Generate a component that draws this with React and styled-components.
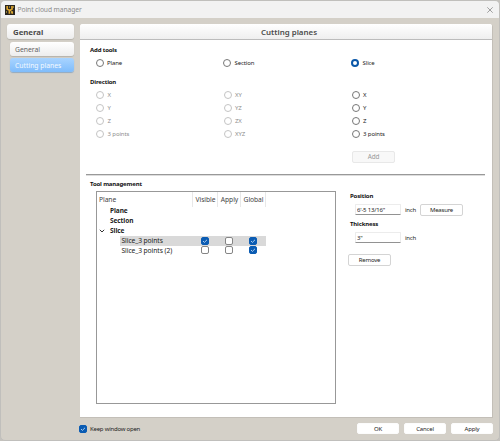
import styled, { createGlobalStyle } from "styled-components";

const GlobalStyle = createGlobalStyle`
    * {
        box-sizing: border-box;
    }

    body {
        margin: 0;
        background: #c4c2bd;
        font-family: 'Noto Sans', 'Open Sans', sans-serif;
        font-size: 6px;
        line-height: 10px;
        color: #222;
    }
`;

const Window = styled.div`
    display: flex;
    flex-direction: column;
    width: 500px;
    height: 441px;
    border: 1px solid #c0bfbc;
    border-radius: 5px;
    overflow: hidden;
    background: #d4d0c8;
    white-space: nowrap;
`;

const TitleBar = styled.header`
    display: flex;
    align-items: center;
    height: 17px;
    padding: 0 6px 0 4px;
    background: #f2f2f2;
    color: #8b8b8b;
    font-size: 6.7px;
    letter-spacing: -0.08px;
`;

const WindowTitle = styled.span`
    flex: 1;
    margin-left: 2.5px;
`;

const Body = styled.div`
    display: flex;
    padding: 6px 6px 0;
`;

const Sidebar = styled.nav`
    display: flex;
    flex-direction: column;
    align-items: flex-end;
    width: 67px;
    margin-right: 6px;
`;

const SideHeader = styled.div`
    width: 67px;
    height: 15px;
    padding-left: 6px;
    line-height: 17px;
    margin-bottom: 3px;
    border-radius: 3px;
    background: linear-gradient(#fff, #ededed);
    box-shadow: 0 1px 1px #b5b2ab;
    color: #4c4c4c;
    font-size: 7.8px;
    font-weight: 700;
`;

const SideItem = styled.div`
    width: 64px;
    height: 14px;
    padding-left: 5px;
    line-height: 15px;
    margin-bottom: 2px;
    border-radius: 3px;
    background: ${(p) => (p.$active ? "linear-gradient(#a9d4ff, #7fbcfb)" : "linear-gradient(#fff, #ededed)")};
    box-shadow: 0 1px 1px ${(p) => (p.$active ? "#92a9c0" : "#b5b2ab")};
    color: ${(p) => (p.$active ? "#f4faff" : "#606060")};
    font-size: 6.8px;
`;

const Panel = styled.main`
    width: 414px;
    height: 394px;
    border-radius: 3px 3px 0 0;
    background: #fff;
    border-right: 1px solid #c3bfb8;
    border-bottom: 1px solid #c3bfb8;
    overflow: hidden;
`;

const PanelTitle = styled.h1`
    height: 16px;
    margin: 0;
    padding-left: 6px;
    line-height: 17px;
    text-align: center;
    background: linear-gradient(#fff, #efefef);
    border-bottom: 1px solid #bcbcbc;
    color: #4c4c4c;
    font-size: 7.9px;
    font-weight: 600;
`;

const Heading = styled.h2`
    height: 10px;
    margin: 0;
    color: #111;
    font-size: 6px;
    font-weight: 700;
    letter-spacing: -0.15px;
`;

const Tools = styled.section`
    height: 134px;
    padding: 5px 0 0 10px;
`;

const RadioGrid = styled.div`
    display: grid;
    grid-template-columns: 127.5px 128px 1fr;
    grid-auto-rows: 12.8px;
    align-items: center;
    padding-left: ${(p) => p.$indent};
    margin: 2px 0 ${(p) => p.$gap || "0"};
`;

const RadioLabel = styled.label`
    display: flex;
    align-items: center;
    gap: 3.5px;
    color: ${(p) => (p.$disabled ? "#8e8e8e" : "#222")};
    font-size: 6px;
    letter-spacing: -0.1px;
`;

const Circle = styled.span`
    width: 8px;
    height: 8px;
    border-radius: 50%;
    border: ${(p) => (p.$checked ? "2.5px solid #0a57a8" : `1px solid ${p.$disabled ? "#c4c4c4" : "#777"}`)};
    background: #fff;
`;

const Button = styled.button`
    width: ${(p) => (p.$plain ? "42px" : "43px")};
    height: ${(p) => (p.$plain ? "11px" : "12px")};
    padding: 0;
    border: 1px solid ${(p) => (p.$plain ? "#fcfcfc" : "#d4d4d4")};
    border-radius: 2px;
    background: #fff;
    color: #222;
    font-family: inherit;
    font-size: 6px;
    line-height: 10px;
    letter-spacing: -0.2px;

    &:disabled {
        background: #f8f8f8;
        border-color: #e8e8e8;
        color: #999;
        font-size: 6.4px;
    }
`;

const AddRow = styled.div`
    padding: 11.5px 0 0 262px;
`;

const Divider = styled.hr`
    height: 2px;
    margin: 0 7px 0 6px;
    border: none;
    border-top: 1px solid #999;
    background: #ddd;
`;

const Management = styled.section`
    padding: 3px 0 0 10px;
`;

const Columns = styled.div`
    display: flex;
    padding: 2px 0 0 6px;
`;

const Tree = styled.div`
    width: 240px;
    height: 213px;
    border: 1px solid #989898;
    font-size: 6.7px;
`;

const TreeRow = styled.div`
    display: grid;
    grid-template-columns: ${(p) => (p.$head ? "96px" : "95px")} 25px 23px 25px;
    height: ${(p) => (p.$head ? "14.4px" : "9.8px")};
    line-height: ${(p) => (p.$head ? "15px" : "9.8px")};
    color: ${(p) => (p.$head ? "#444" : "#222")};
    letter-spacing: -0.07px;
    background: ${(p) => (p.$selected ? "linear-gradient(90deg, transparent 23px, #d9d9d9 23px, #d9d9d9 169px, transparent 169px)" : "none")};
`;

const HeadCell = styled.span`
    padding-left: ${(p) => (p.$first ? "2px" : "1px")};
    border-right: 1px solid #e8e8e8;
    text-align: ${(p) => (p.$first ? "left" : "center")};
`;

const Cell = styled.span`
    display: flex;
    align-items: center;
    justify-content: center;
`;

const NodeName = styled.span`
    display: flex;
    align-items: center;
    gap: 5px;
    padding-left: ${(p) => p.$indent}px;
    font-weight: ${(p) => (p.$bold ? 700 : 400)};
    font-size: ${(p) => (p.$bold ? "6.5px" : "6.7px")};
`;

const Box = styled.span`
    display: flex;
    flex: none;
    width: 8px;
    height: 8px;
    border: 1px solid ${(p) => (p.$checked ? "#0b5cb3" : "#858585")};
    border-radius: 2px;
    background: ${(p) => (p.$checked ? "#0b5cb3" : "#fff")};
`;

const Settings = styled.div`
    display: flex;
    flex-direction: column;
    align-items: flex-start;
    padding-left: 14px;
`;

const Field = styled.div`
    display: flex;
    align-items: center;
    height: 13px;
    margin: 2px 0 3px 5px;
`;

const RemoveRow = styled.div`
    margin: 7px 0 0 -2px;
`;

const Input = styled.input`
    width: 46px;
    height: 11px;
    padding: 0 1px;
    border: 1px solid #ececec;
    border-bottom-color: #929292;
    border-radius: 1px;
    outline: none;
    background: #fff;
    color: #222;
    font-family: inherit;
    font-size: 6px;
    letter-spacing: -0.2px;
`;

const Unit = styled.span`
    width: 15px;
    margin-left: 4px;
    letter-spacing: -0.2px;
`;

const Footer = styled.footer`
    display: flex;
    align-items: center;
    gap: 5px;
    height: 21px;
    padding: 0 6px 0 78px;
`;

const KeepOpen = styled.label`
    display: flex;
    align-items: center;
    gap: 3px;
    flex: 1;
    letter-spacing: -0.22px;
`;

const AppIcon = () => (
    <svg width="10" height="10" viewBox="0 0 10 10">
        <rect width="10" height="10" fill="#29251f" />
        <path d="M2.2 1v3l2.2 1.2v3.6M7 1v3L5 5.5M7.2 6.2v2.6" fill="none" stroke="#dda52d" strokeWidth="1.7" />
        <path d="M4 2h1M6 7h1M1 7h1M8 2h1" stroke="#f5d04e" strokeWidth="1" />
    </svg>
);

const CloseIcon = () => (
    <svg width="6" height="6" viewBox="0 0 6 6">
        <path d="M.3.3l5.4 5.4M5.7.3L.3 5.7" stroke="#8a8a8a" strokeWidth=".8" />
    </svg>
);

const Chevron = () => (
    <svg width="6" height="6" viewBox="0 0 6 6">
        <path d="M.8 1.8L3 4l2.2-2.2" fill="none" stroke="#333" strokeWidth="1" />
    </svg>
);

const Checkbox = ({ checked }) => (
    <Box $checked={checked}>
        {checked && (
            <svg width="6" height="6" viewBox="0 0 6 6">
                <path d="M1 3l1.4 1.4L5 1.8" fill="none" stroke="#d5e8fb" strokeWidth=".8" />
            </svg>
        )}
    </Box>
);

const Radio = ({ label, checked, disabled }) => (
    <RadioLabel $disabled={disabled}>
        <Circle $checked={checked} $disabled={disabled} />
        {label}
    </RadioLabel>
);

const directions = [
    ["X", "XY", "X"],
    ["Y", "YZ", "Y"],
    ["Z", "ZX", "Z"],
    ["3 points", "XYZ", "3 points"],
];

const slices = [
    { name: "Slice_3 points", checks: [true, false, true], selected: true },
    { name: "Slice_3 points (2)", checks: [false, false, true] },
];

const App = () => {
    return (
        <>
            <GlobalStyle />
            <Window>
                <TitleBar>
                    <AppIcon />
                    <WindowTitle>Point cloud manager</WindowTitle>
                    <CloseIcon />
                </TitleBar>

                <Body>
                    <Sidebar>
                        <SideHeader>General</SideHeader>
                        <SideItem>General</SideItem>
                        <SideItem $active>Cutting planes</SideItem>
                    </Sidebar>

                    <Panel>
                        <PanelTitle>Cutting planes</PanelTitle>
                        <Tools>
                            <Heading>Add tools</Heading>
                            <RadioGrid $indent="5.5px" $gap="7px">
                                <Radio label="Plane" />
                                <Radio label="Section" />
                                <Radio label="Slice" checked />
                            </RadioGrid>
                            <Heading>Direction</Heading>
                            <RadioGrid $indent="6px">
                                {directions.map((row) =>
                                    row.map((label, i) => <Radio key={i + label} label={label} disabled={i < 2} />)
                                )}
                            </RadioGrid>
                            <AddRow>
                                <Button disabled>Add</Button>
                            </AddRow>
                        </Tools>

                        <Divider />

                        <Management>
                            <Heading>Tool management</Heading>
                            <Columns>
                                <Tree>
                                    <TreeRow $head>
                                        <HeadCell $first>Plane</HeadCell>
                                        <HeadCell>Visible</HeadCell>
                                        <HeadCell>Apply</HeadCell>
                                        <HeadCell>Global</HeadCell>
                                    </TreeRow>
                                    <TreeRow><NodeName $bold $indent={13}>Plane</NodeName></TreeRow>
                                    <TreeRow><NodeName $bold $indent={13}>Section</NodeName></TreeRow>
                                    <TreeRow><NodeName $bold $indent={2}><Chevron />Slice</NodeName></TreeRow>
                                    {slices.map((slice) => (
                                        <TreeRow key={slice.name} $selected={slice.selected}>
                                            <NodeName $indent={24.5}>{slice.name}</NodeName>
                                            {slice.checks.map((checked, i) => (
                                                <Cell key={i}><Checkbox checked={checked} /></Cell>
                                            ))}
                                        </TreeRow>
                                    ))}
                                </Tree>

                                <Settings>
                                    <Heading>Position</Heading>
                                    <Field>
                                        <Input defaultValue={`6'-5 13/16"`} />
                                        <Unit>inch</Unit>
                                        <Button>Measure</Button>
                                    </Field>
                                    <Heading>Thickness</Heading>
                                    <Field>
                                        <Input defaultValue={`3"`} />
                                        <Unit>inch</Unit>
                                    </Field>
                                    <RemoveRow>
                                        <Button>Remove</Button>
                                    </RemoveRow>
                                </Settings>
                            </Columns>
                        </Management>
                    </Panel>
                </Body>

                <Footer>
                    <KeepOpen>
                        <Checkbox checked />
                        Keep window open
                    </KeepOpen>
                    <Button $plain>OK</Button>
                    <Button $plain>Cancel</Button>
                    <Button $plain>Apply</Button>
                </Footer>
            </Window>
        </>
    );
};

export default App;
